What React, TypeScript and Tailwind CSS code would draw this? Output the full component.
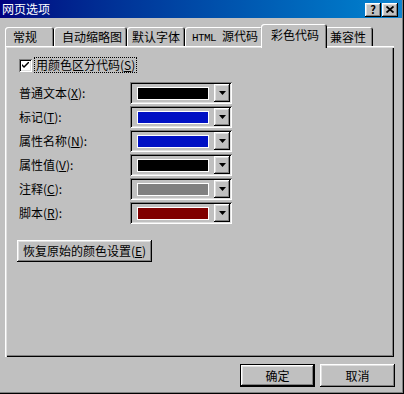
import React from "react";

const raised =
  "shadow-[inset_-1px_-1px_#000,inset_1px_1px_#fff,inset_-2px_-2px_#808080,inset_2px_2px_#dfdfdf]";
const sunken =
  "shadow-[inset_1px_1px_#808080,inset_-1px_-1px_#fff,inset_2px_2px_#000,inset_-2px_-2px_#dfdfdf]";

function Arrow() {
  return (
    <svg width="7" height="4" viewBox="0 0 7 4">
      <polygon points="0,0 7,0 3.5,4" fill="#000" />
    </svg>
  );
}

function ColorCombo({ color }: { color: string }) {
  return (
    <div className={`w-[102px] h-[22px] bg-[#c0c0c0] flex items-center pl-[7px] pr-[2px] ${sunken}`}>
      <div className="w-[72px] h-[13px] border border-white" style={{ backgroundColor: color }} />
      <div className={`ml-auto w-[16px] h-[18px] flex items-center justify-center bg-[#c0c0c0] ${raised}`}>
        <Arrow />
      </div>
    </div>
  );
}

const tabs: { label: React.ReactNode; id: string; w: string; sel?: boolean }[] = [
  { id: "a", label: "常规", w: "w-[49px] pl-[8px]" },
  { id: "b", label: "自动缩略图", w: "w-[73px] pl-[8px]" },
  { id: "c", label: "默认字体", w: "w-[58px] pl-[5px]" },
  {
    id: "d",
    label: (
      <>
        <span className="font-['Liberation_Mono',monospace] text-[11px] tracking-[-0.6px]">HTML </span>源代码
      </>
    ),
    w: "w-[78px] pl-[7px]",
  },
  { id: "e", label: "彩色代码", w: "w-[66px] pl-[10px]", sel: true },
  { id: "f", label: "兼容性", w: "w-[48px] pl-[5px]" },
];

const rows: { label: string; key: string; color: string }[] = [
  { label: "普通文本", key: "X", color: "#000000" },
  { label: "标记", key: "T", color: "#0010c4" },
  { label: "属性名称", key: "N", color: "#0010c4" },
  { label: "属性值", key: "V", color: "#000000" },
  { label: "注释", key: "C", color: "#808080" },
  { label: "脚本", key: "R", color: "#800000" },
];

export default function App() {
  return (
    <div
      className="relative w-[404px] h-[394px] bg-[#c0c0c0] flex flex-col overflow-hidden text-[12px] leading-[14px] text-black font-['Noto_Sans_CJK_SC','Noto_Sans',sans-serif] shadow-[inset_-1px_-1px_#000,inset_-2px_-2px_#808080]"
    >
      {/* title bar */}
      <div className="h-[18px] mr-[2px] flex items-center bg-linear-to-r from-[#000080] to-[#1084d0] pl-[2px] pr-[4px]">
        <span className="text-white text-[12px] leading-[14px]">网页选项</span>
        <div className="ml-auto flex items-center gap-[1px] mt-[1px]">
          <div className={`w-[16px] h-[14px] bg-[#c0c0c0] flex items-center justify-center text-[11px] font-bold leading-[11px] ${raised}`}>
            ?
          </div>
          <div className={`w-[16px] h-[14px] bg-[#c0c0c0] flex items-center justify-center ${raised}`}>
            <svg width="8" height="7" viewBox="0 0 8 7">
              <path d="M0.5 0.5 L7.5 6.5 M7.5 0.5 L0.5 6.5" stroke="#000" strokeWidth="1.8" />
            </svg>
          </div>
        </div>
      </div>

      {/* tabs */}
      <div className="mt-[6px] h-[22px] pl-[5px] flex items-end relative z-10">
        {tabs.map((t) =>
          t.sel ? (
            <div
              key={t.id}
              className={`${t.w} h-[24px] -mx-[2px] -mb-[2px] bg-[#c0c0c0] rounded-t-[3px] flex items-start pt-[4px] shadow-[inset_1px_1px_#fff,inset_-1px_0_#000,inset_-2px_0_#808080] relative z-10`}
            >
              <span className="whitespace-nowrap">{t.label}</span>
            </div>
          ) : (
            <div
              key={t.id}
              className={`${t.w} h-[19px] bg-[#c0c0c0] rounded-t-[3px] flex items-center shadow-[inset_1px_1px_#fff,inset_-1px_0_#000,inset_-2px_0_#808080]`}
            >
              <span className="whitespace-nowrap">{t.label}</span>
            </div>
          )
        )}
      </div>

      {/* panel */}
      <div className="ml-[5px] w-[389px] h-[311px] bg-[#c0c0c0] shadow-[inset_1px_1px_#fff,inset_2px_2px_#dfdfdf,inset_-1px_-1px_#000,inset_-2px_-2px_#808080] flex flex-col pl-[12px] pt-[11px]">
        <div className="flex items-center h-[16px]">
          <div className={`ml-[2px] w-[13px] h-[13px] bg-white flex items-center justify-center ${sunken}`}>
            <svg width="7" height="7" viewBox="0 0 7 7">
              <path d="M0 2 L0 4 L2 6 L7 1 L7 -1 L2 4 Z" fill="#000" />
            </svg>
          </div>
          <div className="ml-[2px] h-[16px] px-[1px] border border-dotted border-black flex items-center">
            <span>
              用颜色区分代码(<u>S</u>)
            </span>
          </div>
        </div>

        <div className="mt-[9px] flex flex-col gap-[2px]">
          {rows.map((r) => (
            <div key={r.label} className="flex items-center h-[22px]">
              <div className="w-[113px] pl-[2px]">
                {r.label}(<u>{r.key}</u>):
              </div>
              <ColorCombo color={r.color} />
            </div>
          ))}
        </div>

        <div className={`mt-[16px] w-[135px] h-[22px] flex items-center justify-center bg-[#c0c0c0] ${raised}`}>
          恢复原始的颜色设置(<u>E</u>)
        </div>
      </div>

      {/* bottom buttons */}
      <div className="mt-[7px] flex justify-end gap-[5px] pr-[9px]">
        <div className="w-[75px] h-[23px] border border-black">
          <div className={`w-full h-full flex items-center justify-center bg-[#c0c0c0] ${raised}`}>确定</div>
        </div>
        <div className={`w-[75px] h-[23px] flex items-center justify-center bg-[#c0c0c0] ${raised}`}>取消</div>
      </div>
    </div>
  );
}
